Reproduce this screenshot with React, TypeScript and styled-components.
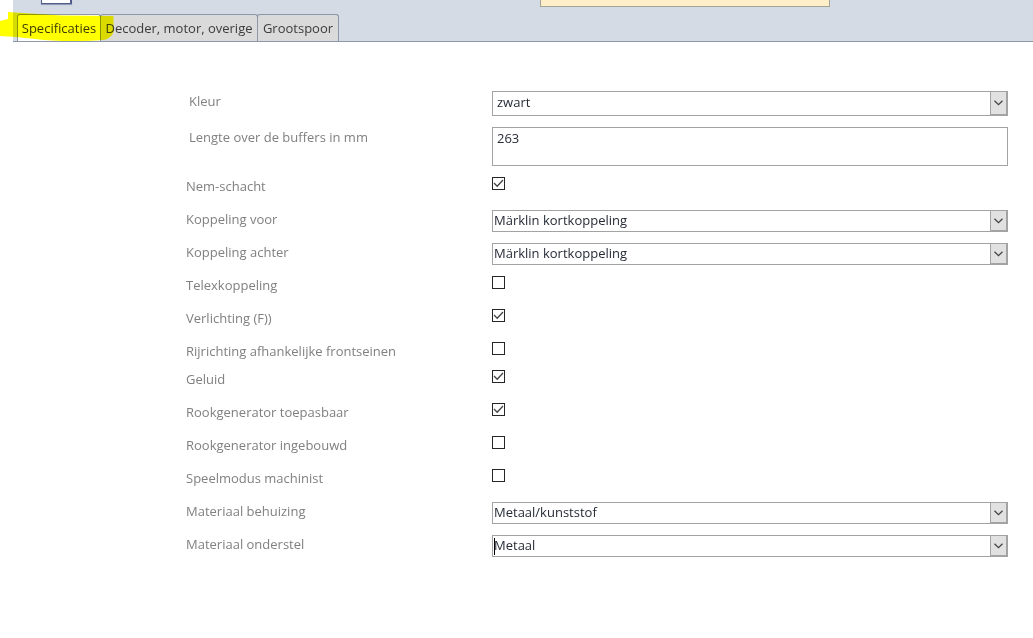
import React, { useId } from "react";
import styled, { createGlobalStyle } from "styled-components";

const GlobalStyle = createGlobalStyle`
  * { box-sizing: border-box; }
  body {
    margin: 0;
    background: #fff;
    color: #262b36;
    font-family: "Open Sans", "Noto Sans", sans-serif;
    font-size: 13px;
    line-height: 18px;
  }
`;

const Header = styled.header`
  position: relative;
  display: flex;
  flex-direction: column;
  justify-content: space-between;
  height: 42px;
  margin-left: 13px;
  background: #d5dbe5;
  border-bottom: 1px solid #8e98a8;
`;

const Toolbar = styled.div`
  display: grid;
  grid-template-columns: 31px 290px;
  column-gap: 468px;
  align-items: start;
  padding-left: 28px;
`;

const ToolButton = styled.button`
  height: 4px;
  padding: 0;
  background: #fff;
  border: solid #4f5c8c;
  border-width: 0 2px 1px 1px;
  box-shadow: 0 1px 1px #8b96b0;
`;

const Notice = styled.div`
  height: 7px;
  background: #ffefc8;
  border: 1px solid #a3a396;
  border-top: 0;
`;

const TabList = styled.div`
  display: flex;
  height: 27px;
  margin-left: 4px;
`;

const Tab = styled.button<{ $active?: boolean; $width: number }>`
  width: ${(p) => p.$width}px;
  margin-right: -1px;
  padding: 0;
  border: 1px solid #8c97a9;
  border-bottom: 0;
  border-radius: 3px 3px 0 0;
  background: ${(p) => (p.$active ? "#fff" : "#dadada")};
  color: #3c3c3c;
  font: inherit;
  text-align: center;
  white-space: nowrap;
`;

const Marker = styled.svg`
  position: absolute;
  left: -13px;
  top: 10px;
  mix-blend-mode: multiply;
  pointer-events: none;
`;

const Form = styled.form`
  display: flex;
  flex-direction: column;
  gap: 11px;
  padding: 49px 25px 24px 186px;
`;

const Row = styled.div<{ $height: number }>`
  display: grid;
  grid-template-columns: 306px minmax(0, 1fr);
  height: ${(p) => p.$height}px;
`;

const Label = styled.label<{ $indent?: boolean }>`
  align-self: start;
  max-height: 100%;
  padding-left: ${(p) => (p.$indent ? 3 : 0)}px;
  overflow: hidden;
  color: #808080;
  line-height: ${(p) => (p.$indent ? 20 : 18)}px;
`;

const Check = styled.input`
  appearance: none;
  width: 13px;
  height: 13px;
  margin: 0;
  border: 1px solid #262626;
  background: #fff;
  &:checked {
    background: url("data:image/svg+xml,%3Csvg xmlns='http://www.w3.org/2000/svg' width='11' height='11'%3E%3Cpath d='M1 5l3.200 3.200L10 2' fill='none' stroke='%23444' stroke-width='1.3'/%3E%3C/svg%3E");
  }
`;

const SelectBox = styled.div`
  position: relative;
  display: grid;
`;

const Select = styled.select<{ $roomy?: boolean }>`
  appearance: none;
  width: 100%;
  height: 100%;
  padding: ${(p) => (p.$roomy ? "0 20px 3px 4px" : "0 20px 2px 1px")};
  border: 1px solid #a3a3a3;
  border-radius: 0;
  background: #fff;
  color: inherit;
  font: inherit;
  outline: none;
`;

const Arrow = styled.span`
  position: absolute;
  top: 0;
  right: 0;
  bottom: 0;
  display: grid;
  place-items: center;
  width: 18px;
  border: 1px solid #a3a3a3;
  border-right-width: 2px;
  border-bottom-width: 2px;
  background: #e1e1e1;
  pointer-events: none;
`;

const Caret = styled.span`
  position: absolute;
  top: 3px;
  bottom: 2px;
  left: 2px;
  width: 1px;
  background: #000;
`;

const TextArea = styled.textarea`
  display: block;
  width: 100%;
  height: 100%;
  padding: 1px 4px;
  border: 1px solid #a3a3a3;
  border-radius: 0;
  color: inherit;
  font: inherit;
  resize: none;
  outline: none;
`;

type Field = {
  label: string;
  kind: "select" | "text" | "check";
  height?: number;
  value?: string;
  checked?: boolean;
  roomy?: boolean;
  editing?: boolean;
};

const fields: Field[] = [
  { label: "Kleur", kind: "select", value: "zwart", height: 25, roomy: true },
  { label: "Lengte over de buffers in mm", kind: "text", value: "263", height: 39, roomy: true },
  { label: "Nem-schacht", kind: "check", checked: true },
  { label: "Koppeling voor", kind: "select", value: "Märklin kortkoppeling" },
  { label: "Koppeling achter", kind: "select", value: "Märklin kortkoppeling" },
  { label: "Telexkoppeling", kind: "check" },
  { label: "Verlichting (F))", kind: "check", checked: true },
  { label: "Rijrichting afhankelijke frontseinen", kind: "check", height: 17 },
  { label: "Geluid", kind: "check", checked: true },
  { label: "Rookgenerator toepasbaar", kind: "check", checked: true },
  { label: "Rookgenerator ingebouwd", kind: "check" },
  { label: "Speelmodus machinist", kind: "check" },
  { label: "Materiaal behuizing", kind: "select", value: "Metaal/kunststof" },
  { label: "Materiaal onderstel", kind: "select", value: "Metaal", height: 21, editing: true },
];

function FieldRow({ field }: { field: Field }) {
  const id = useId();
  return (
    <Row $height={field.height ?? 22}>
      <Label htmlFor={id} $indent={field.roomy}>{field.label}</Label>
      {field.kind === "check" && <Check id={id} type="checkbox" defaultChecked={field.checked} />}
      {field.kind === "text" && <TextArea id={id} defaultValue={field.value} />}
      {field.kind === "select" && (
        <SelectBox>
          <Select id={id} $roomy={field.roomy}>
            <option>{field.value}</option>
          </Select>
          <Arrow>
            <svg width="9" height="6" viewBox="0 0 9 6" aria-hidden="true">
              <path d="M0.5 0.8L4.5 4.6L8.5 0.8" fill="none" stroke="#444" strokeWidth="1.3" />
            </svg>
          </Arrow>
          {field.editing && <Caret />}
        </SelectBox>
      )}
    </Row>
  );
}

export default function App() {
  return (
    <>
      <GlobalStyle />
      <Header>
        <Toolbar>
          <ToolButton type="button" aria-label="Record" />
          <Notice />
        </Toolbar>
        <TabList role="tablist">
          <Tab role="tab" aria-selected="true" $active $width={84}>Specificaties</Tab>
          <Tab role="tab" aria-selected="false" $width={158}>Decoder, motor, overige</Tab>
          <Tab role="tab" aria-selected="false" $width={82}>Grootspoor</Tab>
        </TabList>
        <Marker width="116" height="34" viewBox="0 0 116 34" aria-hidden="true">
          <path
            d="M0 11L8 9V2L15 2.500L62 5.500L113.500 6V22Q112 27 106 29.500Q90 31.500 62 31L44 30L16 27L0 26Z"
            fill="#ff0"
          />
        </Marker>
      </Header>
      <main>
        <Form>
          {fields.map((field) => (
            <FieldRow key={field.label} field={field} />
          ))}
        </Form>
      </main>
    </>
  );
}
